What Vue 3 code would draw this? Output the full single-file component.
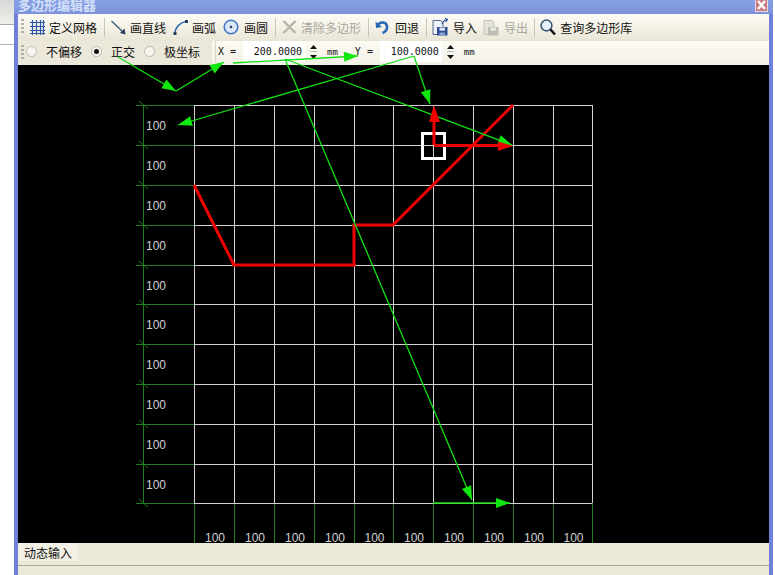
<template>
  <div class="screen">
    <div class="desk">
      <div class="desk-top"></div>
      <div class="desk-row"></div>
    </div>

    <div class="window">
      <div class="titlebar">
        <span class="title">多边形编辑器</span>
        <span class="close">
          <svg width="13" height="13" viewBox="0 0 13 13">
            <path d="M3 1 L10 9 M10 1 L3 9" stroke="#fff" stroke-width="2.4" fill="none" />
          </svg>
        </span>
      </div>

      <div class="toolbar">
        <i class="grip"></i>
        <div class="tool">
          <svg width="15" height="16" viewBox="0 0 15 16">
            <path d="M0 3.5H15M0 7.5H15M0 11.5H15M0 14.5H15M2.5 1V16M6.5 1V16M10.5 1V16M13.5 1V16" stroke="#2c5aa8" stroke-width="1.2" fill="none" />
          </svg>
          <span>定义网格</span>
        </div>
        <i class="sep"></i>
        <div class="tool">
          <svg width="15" height="16" viewBox="0 0 15 16">
            <path d="M0.5 2 L13 14" stroke="#3f5a78" stroke-width="1.3" fill="none" />
            <path d="M14.5 15.5 L13.5 9.5 L9 14 Z" fill="#26405e" />
          </svg>
          <span>画直线</span>
        </div>
        <div class="tool">
          <svg width="15" height="16" viewBox="0 0 15 16">
            <path d="M2 14.5 C2 8.5 7 3.5 13 2.5" stroke="#3a6cb0" stroke-width="1.5" fill="none" />
            <rect x="0.5" y="13" width="3" height="3" fill="#26405e" />
            <rect x="12" y="1" width="3" height="3" fill="#26405e" />
          </svg>
          <span>画弧</span>
        </div>
        <div class="tool wide">
          <svg width="16" height="16" viewBox="0 0 16 16">
            <circle cx="8" cy="8" r="6.8" fill="#dce8f8" stroke="#4478c4" stroke-width="1.6" />
            <circle cx="8" cy="8" r="1.3" fill="#23406e" />
          </svg>
          <span>画圆</span>
        </div>
        <i class="sep"></i>
        <div class="tool off">
          <svg width="15" height="16" viewBox="0 0 15 16">
            <path d="M1.5 2 L13.5 14 M13.5 2 L1.5 14" stroke="#b8b6aa" stroke-width="2.4" fill="none" />
          </svg>
          <span>清除多边形</span>
        </div>
        <i class="sep"></i>
        <div class="tool wide">
          <svg width="15" height="16" viewBox="0 0 15 16">
            <path d="M3 6 C5 2.5 11.5 2.5 12 7.5 C12.3 10.5 10 13 7.5 14" stroke="#2a66b8" stroke-width="2.6" fill="none" />
            <path d="M0.5 2.5 L1 9 L7 8 Z" fill="#2a66b8" />
          </svg>
          <span>回退</span>
        </div>
        <i class="sep tight"></i>
        <div class="tool file">
          <svg width="16" height="18" viewBox="0 0 16 18">
            <path d="M1 2.5 H9 L11 5 V16.5 H1 Z" fill="#eef2f8" stroke="#56688c" />
            <path d="M5 9 H15.5 V17.5 H5 Z" fill="#2c4f94" />
            <rect x="7.5" y="9.5" width="5.5" height="3.2" fill="#dfe6f2" />
            <rect x="7.5" y="14.5" width="5.5" height="3" fill="#8ea4cc" />
            <path d="M10 6 C11 2.5 13 2 15 1.5 M13 0.5 L15.5 1.5 L13.5 4" stroke="#2c4f94" stroke-width="1.2" fill="none" />
          </svg>
          <span>导入</span>
        </div>
        <div class="tool file off">
          <svg width="16" height="18" viewBox="0 0 16 18">
            <path d="M1 2.5 H9 L11 5 V16.5 H1 Z" fill="#e4e3dc" stroke="#c4c3ba" />
            <path d="M5 9 H15.5 V17.5 H5 Z" fill="#bebdb4" />
            <rect x="7.5" y="9.5" width="5.5" height="3.2" fill="#e8e7e0" />
          </svg>
          <span>导出</span>
        </div>
        <i class="sep tight"></i>
        <div class="tool">
          <svg width="16" height="17" viewBox="0 0 16 17">
            <circle cx="6.5" cy="6.5" r="5.4" fill="#e6f0fa" stroke="#34506e" stroke-width="1.5" />
            <path d="M10.5 10.5 L15 15.5" stroke="#111" stroke-width="2.6" fill="none" />
          </svg>
          <span>查询多边形库</span>
        </div>
      </div>

      <div class="inputbar">
        <div class="modes">
          <i class="grip small"></i>
          <label class="mode"><i class="radio"></i>不偏移</label>
          <label class="mode"><i class="radio checked"></i>正交</label>
          <label class="mode"><i class="radio"></i>极坐标</label>
        </div>
        <div class="coords">
          <div class="coord" v-for="c in coords" :key="c.name">
            <span class="coord-name">{{ c.name }} =</span>
            <span class="coord-value">{{ c.value }}</span>
            <svg class="spin" width="9" height="18" viewBox="0 0 9 18">
              <path d="M4.5 2 L8 6 H1 Z" fill="#111" />
              <path d="M1 8.5 H8" stroke="#bbb" />
              <path d="M1 12 H8 L4.5 16 Z" fill="#111" />
            </svg>
            <span class="unit">mm</span>
          </div>
        </div>
      </div>

      <div class="canvas">
        <svg class="drawing" width="751" height="478" viewBox="18 65 751 478">
          <g stroke="#247a24" fill="none">
            <path v-for="y in rowsY" :key="'a' + y" :d="`M136 ${y}H194`" shape-rendering="crispEdges" />
            <path v-for="y in rowsY" :key="'s' + y" :d="`M139 ${y - 4}L148 ${y + 4}`" />
            <path d="M143 105V503" shape-rendering="crispEdges" />
            <path v-for="x in colsX" :key="'b' + x" :d="`M${x} 503V543`" shape-rendering="crispEdges" />
          </g>
          <g stroke="#d2d2d2" fill="none" shape-rendering="crispEdges">
            <path v-for="y in rowsY" :key="'h' + y" :d="`M194 ${y}H592`" />
            <path v-for="x in colsX" :key="'v' + x" :d="`M${x} 105V503`" />
          </g>
          <g class="dim">
            <text v-for="(y, i) in rowsY.slice(0, 10)" :key="'l' + y" x="146" :y="(y + rowsY[i + 1]) / 2 + 5">100</text>
            <text v-for="(x, i) in colsX.slice(0, 10)" :key="'m' + x" :x="(x + colsX[i + 1]) / 2 - 9" y="542">100</text>
          </g>
          <polyline points="194,185 234,265 354,265 354,225 393,225 513,105" stroke="#f00000" stroke-width="3" fill="none" />
          <rect x="422.5" y="133.5" width="22" height="25" stroke="#fff" stroke-width="3" fill="none" />
        </svg>
      </div>

      <div class="bottom">
        <div class="tabs"><span class="tab">动态输入</span></div>
        <div class="status"></div>
      </div>
    </div>

    <div class="edge"></div>

    <!-- the trace arrows run over the input bar as well, so this layer sits on top -->
    <svg class="trace" width="775" height="575" viewBox="0 0 775 575">
      <g v-for="(a, i) in arrows" :key="i">
        <line :x1="a[0]" :y1="a[1]" :x2="a[2]" :y2="a[3]" stroke="#10e010" stroke-width="1.3" />
        <polygon :points="head(a)" fill="#10e810" />
      </g>
      <path d="M434 145V118M434 145.500H502" stroke="#f00000" stroke-width="3" fill="none" />
      <polygon points="434,105 429,122 440,122" fill="#f00000" />
      <polygon points="513,146 498,141.500 498,151" fill="#f00000" />
    </svg>
  </div>
</template>

<script setup>
const rowsY = [105, 145, 185, 225, 265, 304, 344, 384, 424, 464, 503]
const colsX = [194, 234, 274, 314, 354, 393, 433, 473, 513, 553, 592]

const coords = [
  { name: 'X', value: '200.0000' },
  { name: 'Y', value: '100.0000' }
]

const arrows = [
  [118, 57, 176, 91],
  [176, 91, 224, 62],
  [233, 63, 358, 56],
  [285, 59, 472, 500],
  [285, 59, 512, 145],
  [414, 56, 178, 125],
  [414, 56, 430, 104],
  [433, 503, 510, 503]
]

function head(a) {
  const dx = a[2] - a[0]
  const dy = a[3] - a[1]
  const len = Math.hypot(dx, dy)
  const ux = dx / len
  const uy = dy / len
  const bx = a[2] - ux * 14
  const by = a[3] - uy * 14
  return `${a[2]},${a[3]} ${bx - uy * 5},${by + ux * 5} ${bx + uy * 5},${by - ux * 5}`
}
</script>

<style>
html, body {
  margin: 0;
  background: #fff;
}
</style>

<style scoped>
.screen {
  position: relative;
  display: flex;
  width: 775px;
  height: 575px;
  overflow: hidden;
  font-family: "Noto Sans CJK SC", "Liberation Sans", sans-serif;
  font-size: 12px;
  color: #111;
}

.desk {
  width: 14px;
}

.desk-top {
  height: 24px;
  background: linear-gradient(#d8d8d6, #efefec);
  border-bottom: 1px solid #a8a8a4;
}

.desk-row {
  height: 19px;
  border-bottom: 1px solid #b4b4b0;
}

.window {
  width: 751px;
  display: flex;
  flex-direction: column;
  border-left: 4px solid #6f80d8;
  border-right: 4px solid #6f80d8;
}

.edge {
  width: 2px;
}

.titlebar {
  height: 14px;
  margin: 0 -4px;
  padding-left: 4px;
  display: flex;
  justify-content: space-between;
  background: linear-gradient(#87a0e4, #7c92dc);
  overflow: hidden;
}

.title {
  margin-top: -4px;
  font-size: 13px;
  line-height: 18px;
  font-weight: 700;
  color: #d4e0f8;
}

.close {
  width: 13px;
  height: 12px;
  margin-right: 5px;
  background: #c87a80;
  border: 1px solid #e6d8e0;
  border-top: 0;
  box-sizing: border-box;
  overflow: hidden;
}

.close svg {
  display: block;
  margin-left: -1px;
}

.toolbar {
  height: 27px;
  display: flex;
  align-items: center;
  gap: 7px;
  padding-left: 3px;
  padding-bottom: 1px;
  box-sizing: border-box;
  background: linear-gradient(#fbfaf5, #f6f4ea 40%, #e9e5d5);
}

.grip {
  width: 3px;
  height: 16px;
  margin-right: -1px;
  background: repeating-linear-gradient(#b4b2a6 0 2px, transparent 2px 4px);
}

.grip.small {
  margin-right: -7px;
  height: 14px;
}

.tool {
  display: flex;
  align-items: center;
  gap: 4px;
  white-space: nowrap;
}

.tool svg {
  display: block;
  flex: none;
}

.tool.wide {
  gap: 5px;
}

.tool.file {
  gap: 5px;
  margin-right: -1px;
}

.tool.off {
  color: #a8a79c;
}

.sep {
  width: 1px;
  height: 19px;
  margin: 0 -1px 0 0;
  background: #c8c6b8;
}

.sep.tight {
  margin-right: -2px;
}

.inputbar {
  height: 24px;
  display: flex;
  background: linear-gradient(#fbfaf4, #f3f1e5);
}

.modes {
  width: 194px;
  display: flex;
  align-items: center;
  gap: 9px;
  padding: 0 0 3px 3px;
  box-sizing: border-box;
  background: #ebe8da;
}

.mode {
  display: flex;
  align-items: center;
  gap: 9px;
}

.radio {
  width: 9px;
  height: 9px;
  border: 1px solid #bdbbb0;
  border-radius: 50%;
  background: #f6f5ef;
  position: relative;
}

.radio.checked::after {
  content: "";
  position: absolute;
  left: 2px;
  top: 2px;
  width: 5px;
  height: 5px;
  border-radius: 50%;
  background: #111;
}

.coords {
  display: flex;
  height: 21px;
  margin-left: 3px;
  padding-left: 2px;
  gap: 17px;
  border-left: 1px solid #d4d2c4;
}

.coord {
  display: flex;
  align-items: center;
  font-family: "DejaVu Sans Mono", monospace;
  font-size: 10px;
}

.coord-name {
  width: 25px;
  white-space: nowrap;
}

.coord-value {
  width: 62px;
  height: 21px;
  padding-right: 3px;
  box-sizing: border-box;
  background: #fff;
  text-align: right;
  line-height: 21px;
}

.spin {
  display: block;
  margin-left: 4px;
}

.unit {
  margin-left: 9px;
  font-size: 9px;
  line-height: 24px;
}

.canvas {
  flex: 1;
  background: #000;
  overflow: hidden;
}

.drawing {
  display: block;
}

.dim {
  font-family: "Liberation Sans", sans-serif;
  font-size: 12px;
  fill: #d0d0d0;
}

.bottom {
  height: 32px;
  background: #ece9d8;
}

.tabs {
  height: 22px;
}

.tab {
  display: block;
  width: 60px;
  height: 18px;
  line-height: 19px;
  text-align: center;
  background: #f2f0e4;
}

.status {
  height: 9px;
  border-top: 1px solid #aca899;
}

.trace {
  position: absolute;
  left: 0;
  top: 0;
  pointer-events: none;
}
</style>
